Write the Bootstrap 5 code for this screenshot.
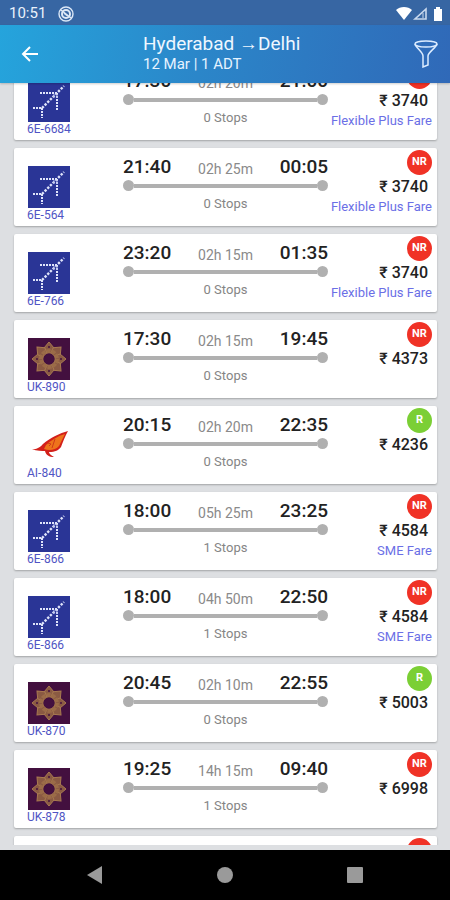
<!DOCTYPE html>
<html lang="en">
<head>
<meta charset="utf-8">
<meta name="viewport" content="width=device-width, initial-scale=1">
<title>Hyderabad to Delhi flights</title>
<link rel="stylesheet" href="https://cdn.jsdelivr.net/npm/bootstrap@5.3.0/dist/css/bootstrap.min.css">
<style>
  body { font-family: Roboto, "Noto Sans", sans-serif; background: #dddfe2; }
  .statusbar { height: 25px; background: #3766a3; padding: 2px 6px 0 9px; font-size: 15px; color: #eaf2fb; }
  .appbar { height: 58px; background: linear-gradient(100deg, #25a4dc 0%, #2b86c9 45%, #3069b8 100%); padding: 0 12px 0 18px; box-shadow: 0 1px 2px #0003; z-index: 1; }
  .appbar button { width: 24px; height: 28px; }
  .route-title { font-size: 19px; line-height: 20px; color: #eef7ff; }
  .route-sub { font-size: 15px; line-height: 20px; color: #e6f3ff; }
  .title-block { margin-left: 101px; }
  .results { border-bottom: 5px solid #dddfe2; min-height: 0; }
  .flights { margin: -21px 13px 0 14px; }
  .flight { height: 78px; background: #fff; border-radius: 2px; box-shadow: 0 1px 2px #0004; }
  .carrier { width: 109px; padding: 18px 0 0 13px; }
  .carrier svg { width: 42px; height: 42px; margin-left: 1px; }
  .code { font-size: 12px; line-height: 14px; color: #5055c4; }
  .legs { padding-top: 7px; }
  .clock { font-size: 19px; line-height: 24px; font-weight: 500; color: #222; }
  .duration { font-size: 14px; line-height: 20px; color: #8a8a8a; }
  .track { height: 13px; }
  .track i { width: 11px; height: 11px; border-radius: 50%; background: #b0b0b0; }
  .track b { height: 4px; background: #b0b0b0; }
  .stops { font-size: 13px; line-height: 24px; color: #858585; }
  .cost { width: 109px; padding: 2px 5px 0 0; }
  .tag { width: 25px; height: 25px; border-radius: 50%; background: #f03226; color: #fff; font-size: 11px; font-weight: 700; }
  .tag-ok { background: #7bcf35; }
  .price { font-size: 16px; line-height: 24px; font-weight: 500; color: #222; padding-right: 4px; }
  .fare { font-size: 13px; line-height: 16px; color: #6b6fe6; }
  .navkeys { height: 50px; background: #000; padding: 0 82px; }
  .navkeys button { width: 26px; height: 26px; }
</style>
<script src="https://cdn.jsdelivr.net/npm/bootstrap@5.3.0/dist/js/bootstrap.bundle.min.js"></script>
</head>
<body>
<svg class="d-none" aria-hidden="true">
  <symbol id="indigo" viewBox="0 0 42 42">
    <rect width="42" height="42" fill="#2a3596"/>
    <g fill="none" stroke="#dfe4fa" stroke-width="2" stroke-dasharray="2 1">
      <path d="M12 13H30M29 13V31M5 28H14M14 28V38"/>
      <path d="M14 28L36 6" stroke-width="2.4" stroke-dasharray="2.4 1.4"/>
      <path d="M25 15h6M25 17h5" stroke="#aab3e6" stroke-width="1"/>
    </g>
  </symbol>
  <symbol id="vistara" viewBox="0 0 42 42">
    <rect width="42" height="42" fill="#43103f"/>
    <g fill="#8a5a43" stroke="#a87a50" stroke-width="1">
      <g id="petals">
        <path id="petal" d="M21 4L26 10L24 15H18L16 10Z"/>
        <use href="#petal" transform="rotate(45 21 21)"/>
        <use href="#petal" transform="rotate(90 21 21)"/>
        <use href="#petal" transform="rotate(135 21 21)"/>
      </g>
      <use href="#petals" transform="rotate(180 21 21)"/>
    </g>
    <circle cx="21" cy="21" r="8" fill="none" stroke="#9b6c48" stroke-width="4" stroke-dasharray="4 1"/>
    <path d="M21 15l1.600 2.200 2.700-.5-.5 2.700 2.200 1.600-2.200 1.600.5 2.700-2.700-.5-1.600 2.200-1.600-2.200-2.700.5.5-2.700-2.200-1.600 2.200-1.600-.5-2.700 2.700.5Z" fill="#43103f"/>
    <g fill="#43103f"><circle cx="21" cy="9" r="1"/><circle cx="21" cy="33" r="1"/><circle cx="9" cy="21" r="1"/><circle cx="33" cy="21" r="1"/></g>
  </symbol>
  <symbol id="airindia" viewBox="0 0 42 42">
    <path d="M40 7C32 9 22 14 15 20C13 22 11 25 4 25.500C9 27 14 27 17 27C18 31 21 33 26 33C23 31 21 30 21 28C27 28 31 26 33 23C35 18 37 12 40 7Z" fill="#d3201a"/>
    <path d="M37 10C30 12 23 16 18 21L16 25C21 27 28 26 31 22Z" fill="#ee741b"/>
    <path d="M20 19l3 1-2 2M27 15l-3 9" fill="none" stroke="#cf3a18"/>
  </symbol>
</svg>

<div class="d-flex flex-column vh-100 overflow-hidden">
  <div class="statusbar d-flex align-items-center flex-shrink-0">
    <span>10:51</span>
    <svg class="ms-2 ps-1" width="20" height="16" viewBox="0 0 16 16" fill="none" stroke="#dce8f7"><circle cx="8" cy="8" r="7" stroke-width="1.4"/><circle cx="8" cy="8" r="4" stroke-width="2"/><path d="M3 4l10 8M6 7l4 3" stroke-width="1.6"/></svg>
    <svg class="ms-auto" width="48" height="16" viewBox="0 0 48 16"><path d="M0 4C4 0 12 0 16 4L8 14Z" fill="#fff"/><path d="M30 3V13H19Z" fill="none" stroke="#c9d9ee" stroke-width="1.6"/><path d="M27 7V12" stroke="#c9d9ee"/><path d="M38 3h2V1h4v2h2v12h-8Z" fill="#fff"/></svg>
  </div>
  <header class="appbar d-flex align-items-center flex-shrink-0">
    <button class="btn p-0 border-0 d-flex align-items-center justify-content-center" aria-label="Back"><svg width="18" height="18" viewBox="0 0 18 18" fill="none" stroke="#fff" stroke-width="2"><path d="M9 2L2 9L9 16M2 9H17"/></svg></button>
    <div class="title-block">
      <div class="route-title">Hyderabad →Delhi</div>
      <div class="route-sub">12 Mar | 1 ADT</div>
    </div>
    <button class="btn p-0 border-0 ms-auto d-flex" aria-label="Filter"><svg width="24" height="28" viewBox="0 0 24 28" fill="none" stroke="#dcecff" stroke-width="1.5"><ellipse cx="12" cy="4" rx="11" ry="3"/><path d="M1 4C2 8 9 12 9 16V27L14 25V16C14 12 22 8 23 4"/></svg></button>
  </header>
  <main class="results flex-grow-1 overflow-hidden">
    <div class="flights d-flex flex-column gap-2" id="flights"></div>
  </main>
  <nav class="navkeys d-flex align-items-center justify-content-between flex-shrink-0" aria-label="System">
    <button class="btn p-0 border-0 d-flex" aria-label="Back"><svg width="26" height="26"><path d="M5 13L20 4V22Z" fill="#9a9a9a"/></svg></button>
    <button class="btn p-0 border-0 d-flex" aria-label="Home"><svg width="26" height="26"><circle cx="13" cy="13" r="8" fill="#9a9a9a"/></svg></button>
    <button class="btn p-0 border-0 d-flex" aria-label="Recent apps"><svg width="26" height="26"><rect x="5" y="5" width="16" height="16" rx="1" fill="#9a9a9a"/></svg></button>
  </nav>
</div>

<script>
  const flights = [
    ["indigo", "6E-6684", "17:30", "02h 20m", "21:00", 0, "NR", 3740, "Flexible Plus Fare"],
    ["indigo", "6E-564", "21:40", "02h 25m", "00:05", 0, "NR", 3740, "Flexible Plus Fare"],
    ["indigo", "6E-766", "23:20", "02h 15m", "01:35", 0, "NR", 3740, "Flexible Plus Fare"],
    ["vistara", "UK-890", "17:30", "02h 15m", "19:45", 0, "NR", 4373, ""],
    ["airindia", "AI-840", "20:15", "02h 20m", "22:35", 0, "R", 4236, ""],
    ["indigo", "6E-866", "18:00", "05h 25m", "23:25", 1, "NR", 4584, "SME Fare"],
    ["indigo", "6E-866", "18:00", "04h 50m", "22:50", 1, "NR", 4584, "SME Fare"],
    ["vistara", "UK-870", "20:45", "02h 10m", "22:55", 0, "R", 5003, ""],
    ["vistara", "UK-878", "19:25", "14h 15m", "09:40", 1, "NR", 6998, ""],
    ["", "", "", "", "", "", "NR", "", ""]
  ];
  document.getElementById("flights").innerHTML = flights.map(([logo, code, dep, dur, arr, stops, tag, price, fare]) => `
    <article class="flight d-flex flex-shrink-0">
      ${code ? `<div class="carrier flex-shrink-0">
        <svg class="d-block" aria-hidden="true"><use href="#${logo}"/></svg>
        <div class="code">${code}</div>
      </div>
      <div class="legs flex-grow-1">
        <div class="d-flex justify-content-between align-items-end">
          <span class="clock">${dep}</span><span class="duration">${dur}</span><span class="clock">${arr}</span>
        </div>
        <div class="track d-flex align-items-center"><i></i><b class="flex-grow-1"></b><i></i></div>
        <div class="stops text-center">${stops} Stops</div>
      </div>` : ""}
      <div class="cost flex-shrink-0 d-flex flex-column align-items-end ms-auto">
        <span class="tag ${tag === "R" ? "tag-ok" : ""} d-flex align-items-center justify-content-center">${tag}</span>
        ${price ? `<span class="price">₹ ${price}</span>` : ""}
        ${fare ? `<span class="fare text-nowrap">${fare}</span>` : ""}
      </div>
    </article>`).join("");
</script>
</body>
</html>
